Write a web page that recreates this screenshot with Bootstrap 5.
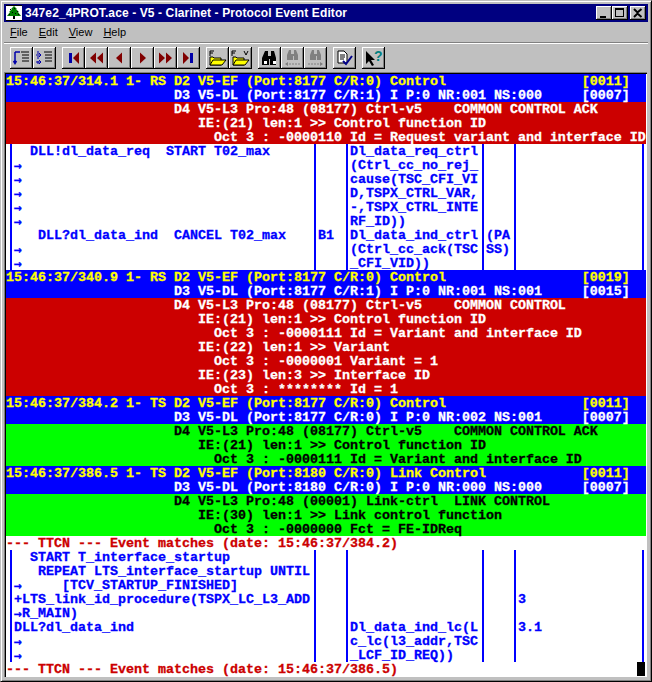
<!DOCTYPE html>
<html lang="en"><head><meta charset="utf-8"><title>Protocol Event Editor</title>
<link href="https://cdn.jsdelivr.net/npm/bootstrap@5.3.0/dist/css/bootstrap.min.css" rel="stylesheet">
<style>
html,body{margin:0;height:682px;overflow:hidden;background:#c0c0c0}
.winframe{width:652px;height:682px;background:#c0c0c0;border:1px solid;border-color:#c0c0c0 #000 #000 #c0c0c0;box-shadow:inset 1px 1px 0 #fff,inset -1px -1px 0 #808080;padding:3px 3px 4px 3px;font-family:"Liberation Sans",Arial,sans-serif}
.titlebar{height:18px;background:#000080;color:#fff;font-weight:700;font-size:12px;letter-spacing:.11px;line-height:18px;padding:0 2px 0 2px}
.titlebar svg{flex:none;margin-right:3px}
.capbtn{width:16px;height:14px;background:#c0c0c0;box-shadow:inset -1px -1px 0 #000,inset 1px 1px 0 #fff,inset -2px -2px 0 #808080;flex:none}
.capbtn svg{display:block;margin:0}
.closecap{margin-left:2px}
.menubar{height:20px;font-size:11px;line-height:20px;color:#000;padding-left:6px;gap:11px}
.menubar u{text-decoration:underline}
.sepline{height:1px;background:#808080;border-bottom:1px solid #fff;box-sizing:content-box}
.toolbar{height:28px;padding:3px 0 0 6px}
.tbtn{width:23px;height:22px;background:#c0c0c0;box-shadow:inset -1px -1px 0 #000,inset 1px 1px 0 #fff,inset -2px -2px 0 #808080;flex:none}
.tbtn svg{display:block}
.tgap{width:6px;flex:none}
.logview{width:643px;height:605px;background:#fff;box-shadow:inset 1px 1px 0 #808080,inset 2px 2px 0 #000;padding:2px 1px 0 2px;font:700 13.33px/14px "Liberation Mono","DejaVu Sans Mono",monospace;-webkit-text-stroke:.3px currentColor;overflow:hidden;position:relative}
.ln{height:14px;line-height:16px;white-space:pre}
.b-blue{background:#00f;color:#fff}
.b-red{background:#c00;color:#fff}
.b-green{background:#0f0;color:#000}
.hdr{color:#ff0}
.ttcn{color:#c00;background:#fff}
.grid-t{display:flex;color:#00f;padding-left:4px;line-height:14px}
.rows9{height:126px}
.rows8{height:112px}
.cl{border-left:2px solid #00f;padding:1px 0 0 2px;flex:none;white-space:pre}
.arw{display:inline-block;width:8px;height:14px;line-height:14px;vertical-align:top;font-family:"DejaVu Sans Mono",monospace;font-size:13.3px}
.w1{width:304px}.w2{width:32px}.w3{width:136px}.w4{width:32px}.w5{width:130px;border-right:2px solid #00f}
.cursorblk{position:absolute;right:2px;bottom:1px;width:8px;height:14px;background:#000}
</style></head><body>
<div class="winframe d-flex flex-column">
 <div class="titlebar d-flex align-items-center">
  <svg width="16" height="16" viewBox="0 0 16 16"><rect width="16" height="16" fill="#fff"/><path d="M8 1l3 3h-1l3 3h-1l3 4H1l3-4H3l3-3H5z" fill="#008000"/><path d="M4 4h1v1H4zM8 3h1v1H8zM11 6h1v1h-1zM6 7h1v1H6zM9 8h1v1H9zM3 9h1v1H3zM12 9h1v1h-1z" fill="#000"/><rect x="7" y="11" width="2" height="3" fill="#000"/><rect x="0" y="0" width="16" height="1" fill="#000"/><rect x="0" y="15" width="16" height="1" fill="#000"/></svg>
  <span class="flex-grow-1">347e2_4PROT.ace - V5 - Clarinet - Protocol Event Editor</span>
  <div class="d-flex">
   <div class="capbtn"><svg width="16" height="14"><rect x="4" y="10" width="6" height="2" fill="#000"/></svg></div>
   <div class="capbtn"><svg width="16" height="14"><path d="M3 2h9v9H3zM4 4v6h7V4z" fill="#000" fill-rule="evenodd"/></svg></div>
   <div class="capbtn closecap"><svg width="16" height="14"><path d="M4 3l3.500 3.500L11.500 3M4 11l3.500-3.500L11.500 11" stroke="#000" stroke-width="2" fill="none"/></svg></div>
  </div>
 </div>
 <div class="menubar d-flex"><span><u>F</u>ile</span><span><u>E</u>dit</span><span><u>V</u>iew</span><span><u>H</u>elp</span></div>
 <div class="sepline"></div>
 <div class="toolbar d-flex">
  <div class="tbtn"><svg width="23" height="22"><path d="M5 5h5M5 5v11M3.500 14l1.500 2.500L6.500 14" stroke="#00a" stroke-width="1.500" fill="none"/><path d="M11 5h8M12 8h7M12 11h7M12 14h7" stroke="#000"/></svg></div>
  <div class="tbtn"><svg width="23" height="22"><path d="M5 4v14" stroke="#00a" stroke-dasharray="3 2"/><path d="M3 8h5M6 6l2 2-2 2M3 15h5M6 13l2 2-2 2" stroke="#00a" fill="none"/><path d="M11 5h8M12 8h7M12 11h7M12 14h7" stroke="#000"/></svg></div>
  <div class="tgap"></div>
  <div class="tbtn"><svg width="23" height="22"><rect x="7" y="6" width="3" height="10" fill="#00a"/><path d="M17 5v12l-6-6z" fill="#800000"/></svg></div>
  <div class="tbtn"><svg width="23" height="22"><path d="M11 5.500v11L5 11zM18 5.500v11L12 11z" fill="#800000"/></svg></div>
  <div class="tbtn"><svg width="23" height="22"><path d="M14 5.500v11L8 11z" fill="#800000"/></svg></div>
  <div class="tbtn"><svg width="23" height="22"><path d="M9 5.500v11L15 11z" fill="#800000"/></svg></div>
  <div class="tbtn"><svg width="23" height="22"><path d="M5 5.500v11L11 11zM12 5.500v11L18 11z" fill="#800000"/></svg></div>
  <div class="tbtn"><svg width="23" height="22"><path d="M6 5v12l6-6z" fill="#800000"/><rect x="13" y="6" width="3" height="10" fill="#00a"/></svg></div>
  <div class="tgap"></div>
  <div class="tbtn"><svg width="23" height="22"><path d="M4 18V10h3l1 1h7v7z" fill="#ff0" stroke="#000"/><path d="M4 18l3-5h13l-4 5z" fill="#ff0" stroke="#000"/><path d="M4 4h4M4 4v5M4 6h3" stroke="#000" fill="none"/></svg></div>
  <div class="tbtn"><svg width="23" height="22"><path d="M4 18V10h3l1 1h7v7z" fill="#ff0" stroke="#000"/><path d="M4 18l3-5h13l-4 5z" fill="#ff0" stroke="#000"/><path d="M3 4h4M3 4v5M3 6h3M15 4l2 4 2-4" stroke="#000" fill="none"/></svg></div>
  <div class="tgap"></div>
  <div class="tbtn"><svg width="23" height="22"><path d="M7 4h3v5h3V4h3l2 7v7h-6v-6h-1v6H4v-7z" fill="#000"/><rect x="6" y="14" width="3" height="3" fill="#fff"/><rect x="15" y="14" width="3" height="3" fill="#fff"/></svg></div>
  <div class="tbtn"><svg width="23" height="22"><path d="M8 3h2v4h3V3h2l2 5v5h-4V9h-1v4H6V8z" fill="#808080"/><path d="M5 17h14" stroke="#808080" stroke-dasharray="2 1"/><path d="M4 17l3-2v4z" fill="#808080"/></svg></div>
  <div class="tbtn"><svg width="23" height="22"><path d="M8 3h2v4h3V3h2l2 5v5h-4V9h-1v4H6V8z" fill="#808080"/><path d="M4 17h14" stroke="#808080" stroke-dasharray="2 1"/><path d="M19 17l-3-2v4z" fill="#808080"/></svg></div>
  <div class="tgap"></div>
  <div class="tbtn"><svg width="23" height="22"><path d="M5 4h6l3 3v9H5z" fill="#fff" stroke="#000"/><path d="M7 8h5M7 10h5M7 12h4" stroke="#000"/><path d="M10 14l3 3 6-8" stroke="#008" stroke-width="2" fill="none"/></svg></div>
  <div class="tgap"></div>
  <div class="tbtn"><svg width="23" height="22"><path d="M4 4v13l3-3 3 5 2-1-3-5h4z" fill="#000"/><text x="12" y="14" font-family="Liberation Sans,sans-serif" font-weight="700" font-size="14" fill="#008080">?</text></svg></div>
 </div>
 <div class="logview">
  <div class="ln b-blue hdr">15:46:37/314.1 1- RS D2 V5-EF (Port:8177 C/R:0) Control                 [0011]</div>
  <div class="ln b-blue">                     D3 V5-DL (Port:8177 C/R:1) I P:0 NR:001 NS:000     [0007]</div>
  <div class="ln b-red">                     D4 V5-L3 Pro:48 (08177) Ctrl-v5    COMMON CONTROL ACK</div>
  <div class="ln b-red">                        IE:(21) len:1 >> Control function ID</div>
  <div class="ln b-red">                          Oct 3 : -0000110 Id = Request variant and interface ID</div>
  <div class="grid-t rows9">
   <div class="cl w1">  DLL!dl_data_req  START T02_max
<span class="arw">→</span>
<span class="arw">→</span>
<span class="arw">→</span>
<span class="arw">→</span>
<span class="arw">→</span>
   DLL?dl_data_ind  CANCEL T02_max
<span class="arw">→</span>
<span class="arw">→</span></div>
   <div class="cl w2">





B1</div>
   <div class="cl w3">Dl_data_req_ctrl
(Ctrl_cc_no_rej_
cause(TSC_CFI_VI
D,TSPX_CTRL_VAR,
-,TSPX_CTRL_INTE
RF_ID))
Dl_data_ind_ctrl
(Ctrl_cc_ack(TSC
_CFI_VID))</div>
   <div class="cl w4">





(PA
SS)</div>
   <div class="cl w5"></div>
  </div>
  <div class="ln b-blue hdr">15:46:37/340.9 1- RS D2 V5-EF (Port:8177 C/R:0) Control                 [0019]</div>
  <div class="ln b-blue">                     D3 V5-DL (Port:8177 C/R:1) I P:0 NR:001 NS:001     [0015]</div>
  <div class="ln b-red">                     D4 V5-L3 Pro:48 (08177) Ctrl-v5    COMMON CONTROL</div>
  <div class="ln b-red">                        IE:(21) len:1 >> Control function ID</div>
  <div class="ln b-red">                          Oct 3 : -0000111 Id = Variant and interface ID</div>
  <div class="ln b-red">                        IE:(22) len:1 >> Variant</div>
  <div class="ln b-red">                          Oct 3 : -0000001 Variant = 1</div>
  <div class="ln b-red">                        IE:(23) len:3 >> Interface ID</div>
  <div class="ln b-red">                          Oct 3 : ******** Id = 1</div>
  <div class="ln b-blue hdr">15:46:37/384.2 1- TS D2 V5-EF (Port:8177 C/R:0) Control                 [0011]</div>
  <div class="ln b-blue">                     D3 V5-DL (Port:8177 C/R:0) I P:0 NR:002 NS:001     [0007]</div>
  <div class="ln b-green">                     D4 V5-L3 Pro:48 (08177) Ctrl-v5    COMMON CONTROL ACK</div>
  <div class="ln b-green">                        IE:(21) len:1 >> Control function ID</div>
  <div class="ln b-green">                          Oct 3 : -0000111 Id = Variant and interface ID</div>
  <div class="ln b-blue hdr">15:46:37/386.5 1- TS D2 V5-EF (Port:8180 C/R:0) Link Control            [0011]</div>
  <div class="ln b-blue">                     D3 V5-DL (Port:8180 C/R:0) I P:0 NR:000 NS:000     [0007]</div>
  <div class="ln b-green">                     D4 V5-L3 Pro:48 (00001) Link-ctrl  LINK CONTROL</div>
  <div class="ln b-green">                        IE:(30) len:1 >> Link control function</div>
  <div class="ln b-green">                          Oct 3 : -0000000 Fct = FE-IDReq</div>
  <div class="ln ttcn">--- TTCN --- Event matches (date: 15:46:37/384.2)</div>
  <div class="grid-t rows8">
   <div class="cl w1">  START T_interface_startup
   REPEAT LTS_interface_startup UNTIL
<span class="arw">→</span>     [TCV_STARTUP_FINISHED]
+LTS_link_id_procedure(TSPX_LC_L3_ADD
<span class="arw">→</span>R_MAIN)
DLL?dl_data_ind
<span class="arw">→</span>
<span class="arw">→</span></div>
   <div class="cl w2"></div>
   <div class="cl w3">




Dl_data_ind_lc(L
c_lc(l3_addr,TSC
_LCF_ID_REQ))</div>
   <div class="cl w4"></div>
   <div class="cl w5">


3

3.1</div>
  </div>
  <div class="ln ttcn">--- TTCN --- Event matches (date: 15:46:37/386.5)</div>
  <div class="cursorblk"></div>
 </div>
</div>
</body></html>
